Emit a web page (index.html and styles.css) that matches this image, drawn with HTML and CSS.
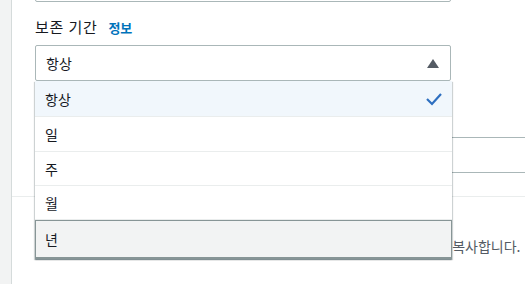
FILE: index.html
```html
<!DOCTYPE html>
<html lang="ko">
<head>
    <meta charset="UTF-8">
    <title>보존 기간</title>
    <link rel="stylesheet" href="styles.css">
</head>
<body>
<div class="page">
    <aside class="side-nav"></aside>
    <main class="content">
        <div class="form-block">
            <div class="input input-name"></div>

            <div class="field">
                <div class="label-row">
                    <span class="label">보존 기간</span>
                    <a class="info-link" href="#">정보</a>
                </div>
                <div class="select-wrap">
                    <div class="select">
                        <span>항상</span>
                        <svg class="caret" width="12" height="9" viewBox="0 0 12 9">
                            <polygon points="0,9 6,0 12,9" fill="#545b64"/>
                        </svg>
                    </div>
                    <ul class="dropdown">
                        <li class="option selected">
                            <span>항상</span>
                            <svg class="check" width="18" height="14" viewBox="0 0 18 14">
                                <path d="M2 7 L7 12 L16 2" fill="none" stroke="#2e6fc0" stroke-width="2.2"/>
                            </svg>
                        </li>
                        <li class="option">일</li>
                        <li class="option">주</li>
                        <li class="option">월</li>
                        <li class="option highlighted">년</li>
                    </ul>
                </div>
            </div>

            <div class="field field-value">
                <div class="input input-wide"></div>
            </div>
        </div>

        <div class="divider"></div>

        <div class="copy-tags">
            <p class="description">백업 규칙의 태그를 (선택 사항) 복구 지점_태그 목록에도 모두 자동으로 복사합니다.</p>
        </div>
    </main>
</div>
</body>
</html>
```

FILE: styles.css
```css
body {
    margin: 0;
    font-family: "Noto Sans CJK KR", "Noto Sans", sans-serif;
    font-size: 14px;
    color: #16191f;
    background: #ffffff;
    overflow: hidden;
}

.page {
    display: flex;
    height: 284px;
}

.side-nav {
    width: 11px;
    flex-shrink: 0;
    background-color: #f2f3f3;
    border-right: 1px solid #d5dbdb;
}

.content {
    flex: 1;
    min-width: 0;
    margin-top: -34px;
}

.form-block {
    padding-left: 23px;
}

.input {
    box-sizing: border-box;
    height: 36px;
    border: 1px solid #aab7b8;
    border-radius: 2px;
    background: #ffffff;
}

.input-name {
    width: 416px;
}

.input-wide {
    width: 520px;
}

.field {
    margin-top: 14px;
}

.label-row {
    display: flex;
    align-items: baseline;
    gap: 11px;
    line-height: 22px;
    margin-bottom: 6px;
}

.label {
    font-size: 15px;
    letter-spacing: 0.6px;
}

.info-link {
    color: #0073bb;
    font-size: 13px;
    font-weight: bold;
    text-decoration: none;
}

.select-wrap {
    position: relative;
    width: 416px;
}

.select {
    box-sizing: border-box;
    height: 36px;
    display: flex;
    align-items: center;
    justify-content: space-between;
    padding: 0 11px 0 10px;
    border: 1px solid #aab7b8;
    border-radius: 2px;
}

.dropdown {
    position: absolute;
    top: 100%;
    left: 0;
    right: -1px;
    margin: 0;
    padding: 0;
    list-style: none;
    background: #ffffff;
    z-index: 2;
    box-shadow: 0 1px 1px 0 rgba(0, 28, 36, 0.3), 1px 1px 1px 0 rgba(0, 28, 36, 0.15), -1px 1px 1px 0 rgba(0, 28, 36, 0.15);
}

.option {
    box-sizing: border-box;
    height: 34px;
    display: flex;
    align-items: center;
    justify-content: space-between;
    padding: 0 9px 0 10px;
    border-bottom: 1px solid #eaeded;
}

.option.selected {
    height: 36px;
    background-color: #f1f7fc;
}

.option:nth-child(2) {
    height: 35px;
}

.option.highlighted {
    height: 39px;
    background-color: #f2f3f3;
    border: 1px solid #879596;
    border-bottom-width: 2px;
    padding-left: 9px;
}

.field-value {
    margin-top: 56px;
}

.divider {
    margin-top: 23px;
    border-top: 1px solid #eaeded;
}

.copy-tags {
    padding: 38px 0 0 23px;
}

.description {
    margin: 0;
    line-height: 22px;
    color: #545b64;
    white-space: nowrap;
}
```
